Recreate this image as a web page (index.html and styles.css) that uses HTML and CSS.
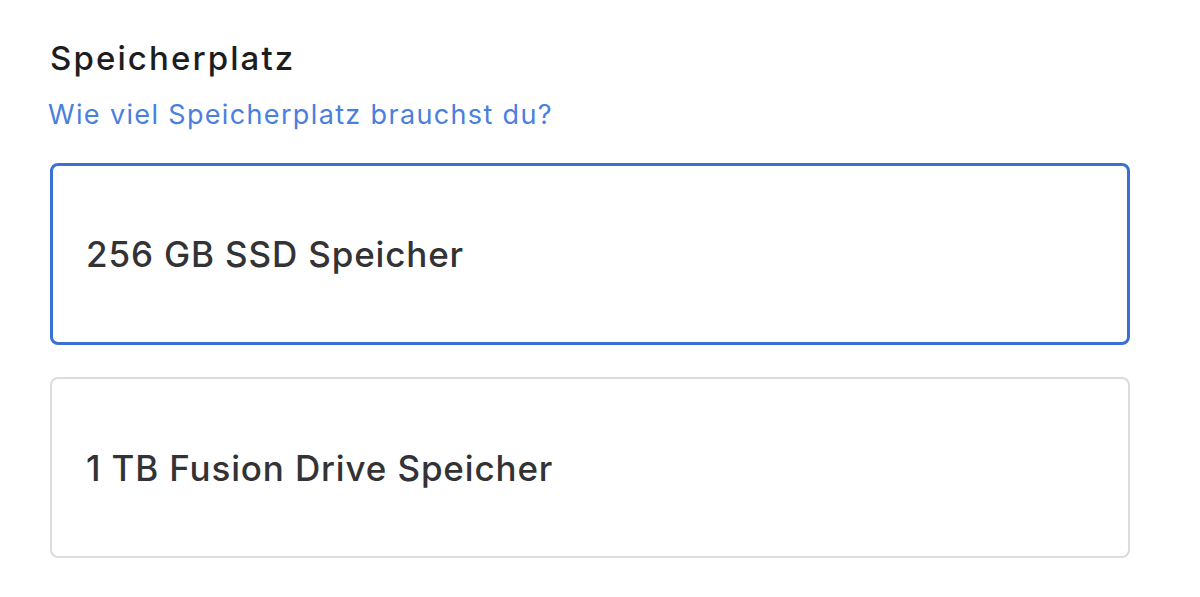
FILE: index.html
```html
<!DOCTYPE html>
<html lang="de">
<head>
<meta charset="utf-8">
<link rel="stylesheet" href="styles.css">
</head>
<body>
<section class="storage">
  <h2 class="title">Speicherplatz</h2>
  <a class="help" href="#">Wie viel Speicherplatz brauchst du?</a>
  <div class="options">
    <div class="option selected">256 GB SSD Speicher</div>
    <div class="option">1 TB Fusion Drive Speicher</div>
  </div>
</section>
</body>
</html>
```
FILE: styles.css
```css
html, body { margin: 0; padding: 0; background: #fff; }
body { font-family: Inter, "Noto Sans", sans-serif; }
.storage { padding: 38px 70px 0 50px; }
.title { margin: 0; font-size: 33px; font-weight: 500; color: #1d1d1f; line-height: 40px; letter-spacing: 2.1px; }
.help { display: block; margin-top: 20px; font-size: 27px; color: #4a7fde; text-decoration: none; line-height: 34px; letter-spacing: 1.35px; margin-left: -2px; }
.options { margin-top: 31px; display: flex; flex-direction: column; gap: 32px; }
.option { box-sizing: border-box; height: 181px; border: 2px solid #dcdcdc; border-radius: 8px; display: flex; align-items: center; padding-left: 34px; font-size: 35px; font-weight: 500; color: #333336; letter-spacing: 0.85px; }
.option.selected { border: 3px solid #3a70d3; padding-left: 33px; height: 182px; }
```
